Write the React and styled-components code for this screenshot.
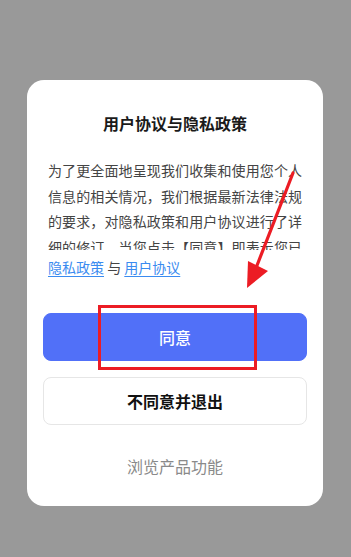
import React from "react";
import styled, { createGlobalStyle } from "styled-components";

const GlobalStyle = createGlobalStyle`
	html, body {
		margin: 0;
		padding: 0;
		background: #999999;
	}
	body {
		font-family: "Noto Sans CJK SC", "Noto Sans", sans-serif;
	}
`;

const paragraph =
	"为了更全面地呈现我们收集和使用您个人信息的相关情况，我们根据最新法律法规的要求，对隐私政策和用户协议进行了详细的修订。当您点击【同意】即表示您已充分阅读、理解并接受更新后的全部内容。";

function App() {
	return (
		<Screen>
			<GlobalStyle />
			<Card>
				<Title>用户协议与隐私政策</Title>
				<Scroll>
					<p>{paragraph}</p>
				</Scroll>
				<Links>
					<a href="#privacy">隐私政策</a>
					<span> 与 </span>
					<a href="#agreement">用户协议</a>
				</Links>
				<Actions>
					<Button primary>同意</Button>
					<Button>不同意并退出</Button>
				</Actions>
				<Browse>浏览产品功能</Browse>
			</Card>
			<Highlight />
			<Arrow viewBox="0 0 351 557">
				<line x1="293" y1="173" x2="256" y2="268" stroke="#ec1c24" strokeWidth="3.2" strokeLinecap="round" />
				<polygon points="247,288 248,261 268,271" fill="#ec1c24" />
			</Arrow>
		</Screen>
	);
}

const Screen = styled.div`
	position: relative;
	width: 351px;
	height: 557px;
	padding-top: 80px;
	box-sizing: border-box;
	background: #999999;
	overflow: hidden;
`;

const Card = styled.div`
	width: 296px;
	height: 426px;
	margin-left: 27px;
	padding: 30px 16px 0;
	box-sizing: border-box;
	background: #ffffff;
	border-radius: 17px;
	display: flex;
	flex-direction: column;
`;

const Title = styled.h2`
	margin: 0;
	font-size: 16px;
	line-height: 26px;
	font-weight: 600;
	color: #1a1a1a;
	text-align: center;
`;

const Scroll = styled.div`
	margin-top: 22px;
	padding: 0 5px;
	height: 92px;
	overflow: hidden;
	> p {
		margin: 0;
		font-size: 14px;
		line-height: 25.5px;
		color: #444444;
		text-align: justify;
	}
`;

const Links = styled.div`
	margin-top: 5px;
	padding: 0 5px;
	font-size: 14px;
	line-height: 25px;
	color: #444444;
	a {
		color: #3a8bf0;
		text-decoration: underline;
		text-underline-offset: 3px;
	}
`;

const Actions = styled.div`
	margin-top: 33px;
	display: flex;
	flex-direction: column;
	gap: 16px;
`;

const Button = styled.button`
	height: 48px;
	border-radius: 8px;
	font-family: inherit;
	font-size: 16px;
	font-weight: ${(props) => (props.primary ? 500 : 700)};
	color: ${(props) => (props.primary ? "#ffffff" : "#111111")};
	background: ${(props) => (props.primary ? "#5170f8" : "#ffffff")};
	border: 1px solid ${(props) => (props.primary ? "#5170f8" : "#e6e6e6")};
	cursor: pointer;
`;

const Browse = styled.div`
	margin-top: 30px;
	font-size: 16px;
	line-height: 22px;
	color: #8a8a8a;
	text-align: center;
`;

const Highlight = styled.div`
	position: absolute;
	left: 98px;
	top: 305px;
	width: 159px;
	height: 65px;
	box-sizing: border-box;
	border: 3px solid #ec1c24;
	pointer-events: none;
`;

const Arrow = styled.svg`
	position: absolute;
	inset: 0;
	width: 351px;
	height: 557px;
	pointer-events: none;
`;

export default App;
